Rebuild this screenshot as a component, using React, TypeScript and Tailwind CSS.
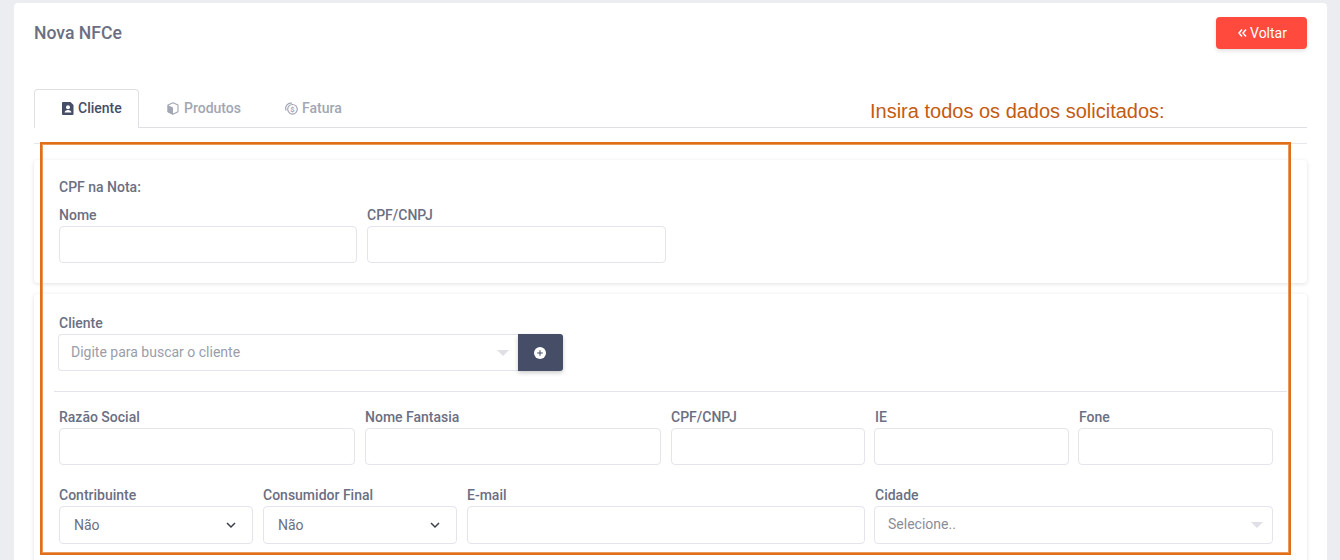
import React from "react";

const labelCls = "block text-[14px] leading-[21px] font-medium text-[#6b6f82]";
const inputCls = "block w-full h-[37px] rounded-[4px] border border-[#e4e5ec] bg-white";

function Field({ label, className, labelClass = "" }: { label: string; className: string; labelClass?: string }) {
  return (
    <div className={className}>
      <label className={`${labelCls} ${labelClass}`}>{label}</label>
      <input className={inputCls} />
    </div>
  );
}

function Chevron() {
  return (
    <svg width="12" height="12" viewBox="0 0 12 12" fill="none" stroke="#3b3f4a" strokeWidth="1.5" className="absolute right-[15px] top-[12px]">
      <path d="M2 4l4 4 4-4" />
    </svg>
  );
}

function NativeSelect({ label, className }: { label: string; className: string }) {
  return (
    <div className={className}>
      <label className={labelCls}>{label}</label>
      <div className="relative h-[38px] rounded-[4px] border border-[#e4e5ec] bg-white pl-[14px] text-[14px] leading-[36px] text-[#6b6f82]">
        Não
        <Chevron />
      </div>
    </div>
  );
}

function Caret() {
  return <div className="h-0 w-0 border-x-[6px] border-t-[6px] border-x-transparent border-t-[#dfe0e6]" />;
}

function FileUserIcon() {
  return (
    <svg width="12" height="13" viewBox="0 0 12 13">
      <path fill="#464d66" d="M1 0h7.5L11.5 3v9a1 1 0 0 1-1 1H1a1 1 0 0 1-1-1V1a1 1 0 0 1 1-1z" />
      <circle cx="6" cy="5.2" r="2" fill="#fff" />
      <path fill="#fff" d="M2.6 10.6c0-1.7 1.4-2.6 3.4-2.6s3.4.9 3.4 2.6z" />
    </svg>
  );
}

function CubeIcon() {
  return (
    <svg width="12" height="13" viewBox="0 0 12 13">
      <path d="M6 .8l5 2.3v6.6l-5 2.6-5-2.6V3.1z" fill="#fff" stroke="#a3a6b3" strokeWidth="1.1" strokeLinejoin="round" />
      <path d="M.6 3L6 5.5v7.2L.6 9.9z" fill="#a3a6b3" />
    </svg>
  );
}

function CoinIcon() {
  return (
    <svg width="13" height="13" viewBox="0 0 13 13" fill="none" stroke="#a3a6b3" strokeWidth="1.2">
      <circle cx="7.5" cy="7.3" r="4.8" />
      <path d="M1.2 8.5A5.2 5.2 0 0 1 7 1.2" />
      <text x="7.5" y="10" textAnchor="middle" fontSize="7.5" fontWeight="700" fill="#a3a6b3" stroke="none" fontFamily="Roboto, sans-serif">$</text>
    </svg>
  );
}

export default function App() {
  return (
    <div className="relative h-[560px] w-[1340px] overflow-hidden bg-[#ecedf0] pt-[3px] pl-[14px] font-['Roboto',sans-serif]">
      <div className="h-[600px] w-[1313px] rounded-[4px] bg-white px-[20px] pt-[14px]">
        {/* header */}
        <div className="flex h-[32px] items-start justify-between">
          <h1 className="mt-[4px] text-[17.6px] leading-[24px] font-medium text-[#6b6f82]">Nova NFCe</h1>
          <button className="flex h-[32px] w-[91px] items-center justify-center gap-[3px] rounded-[4px] bg-[#ff4a3d] pl-[2px] text-[14px] font-normal text-white shadow-[0_2px_4px_rgba(0,0,0,0.12)]">
            <svg width="9" height="8" viewBox="0 0 9 8" fill="none" stroke="#fff" strokeWidth="1.5">
              <path d="M4 .5L1 4l3 3.5M8 .5L5 4l3 3.5" />
            </svg>
            Voltar
          </button>
        </div>

        {/* tabs */}
        <div className="mt-[40px] flex h-[39px] border-b border-[#dfe0e6]">
          <div className="flex h-[39px] w-[105px] items-center gap-[4px] rounded-t-[4px] border border-b-0 border-[#dfe0e6] bg-white pl-[27px] pb-[1px] text-[14px] font-medium text-[#464d66]">
            <FileUserIcon />
            Cliente
          </div>
          <div className="flex h-[38px] w-[118px] items-center gap-[5px] pl-[28px] text-[14px] font-medium text-[#a3a6b3]">
            <CubeIcon />
            Produtos
          </div>
          <div className="flex h-[38px] w-[113px] items-center gap-[4px] pl-[28px] text-[14px] font-medium text-[#a3a6b3]">
            <CoinIcon />
            Fatura
          </div>
        </div>

        {/* tab content divider */}
        <div className="mt-[15px] h-px bg-[#e6e7eb]" />

        {/* first section */}
        <section className="mt-[16px] h-[123px] rounded-[4px] bg-white pl-[20px] pt-[17px] shadow-[0_1px_4px_rgba(0,0,0,0.12)]">
          <p className="pl-[5px] text-[14px] leading-[21px] font-medium text-[#6b6f82]">CPF na Nota:</p>
          <div className="mt-[7px] flex">
            <Field label="Nome" className="w-[308px] px-[5px]" />
            <Field label="CPF/CNPJ" className="w-[309px] px-[5px]" />
          </div>
        </section>

        {/* second section */}
        <section className="mt-[11px] h-[320px] rounded-[4px] bg-white pl-[20px] pr-[20px] pt-[19px] shadow-[0_1px_4px_rgba(0,0,0,0.12)]">
          <div className="pl-[4px]">
            <label className={`${labelCls} ml-[1px]`}>Cliente</label>
            <div className="flex w-[505px]">
              <div className="flex h-[37px] w-[460px] items-center justify-between rounded-l-[4px] border border-r-0 border-[#e4e5ec] pl-[12px] pr-[9px] text-[14px] text-[#9a9da9]">
                Digite para buscar o cliente
                <Caret />
              </div>
              <button className="flex h-[37px] w-[45px] items-center justify-center rounded-r-[3px] bg-[#464d66] shadow-[0_2px_4px_rgba(0,0,0,0.2)]">
                <svg width="12" height="12" viewBox="0 0 12 12" className="-ml-[1px]">
                  <circle cx="6" cy="6" r="6" fill="#fff" />
                  <path d="M6 3.2v5.6M3.2 6h5.6" stroke="#464d66" strokeWidth="1" />
                </svg>
              </button>
            </div>
          </div>

          <hr className="mt-[20px] border-t border-[#e4e5ec]" />

          <div className="mt-[15px] flex w-[1224px]">
            <Field label="Razão Social" className="w-[306px] px-[5px]" />
            <Field label="Nome Fantasia" className="w-[306px] px-[5px]" />
            <Field label="CPF/CNPJ" className="w-[204px] px-[5px]" />
            <Field label="IE" className="w-[204px] pl-[4px] pr-[5px]" labelClass="ml-[1px]" />
            <Field label="Fone" className="w-[204px] pl-[4px] pr-[5px]" labelClass="ml-[1px]" />
          </div>

          <div className="mt-[20px] flex w-[1224px]">
            <NativeSelect label="Contribuinte" className="w-[204px] px-[5px]" />
            <NativeSelect label="Consumidor Final" className="w-[204px] px-[5px]" />
            <div className="w-[408px] px-[5px]">
              <label className={labelCls}>E-mail</label>
              <input className="block h-[38px] w-full rounded-[4px] border border-[#e4e5ec] bg-white" />
            </div>
            <div className="w-[408px] pl-[4px] pr-[5px]">
              <label className={`${labelCls} ml-[1px]`}>Cidade</label>
              <div className="flex h-[38px] items-center justify-between rounded-[4px] border border-[#e4e5ec] bg-white pl-[13px] pr-[9px] text-[14px] text-[#8a8d99]">
                <span className="-mt-[1px]">Selecione..</span>
                <Caret />
              </div>
            </div>
          </div>
        </section>
      </div>

      {/* annotation overlay */}
      <p className="absolute left-[870px] top-[98px] font-['Liberation_Sans',sans-serif] text-[20px] leading-[26px] text-[#c55a11]">
        Insira todos os dados solicitados:
      </p>
      <div className="absolute left-[40px] top-[142px] h-[413px] w-[1251px] border-2 border-[#df6f1b] shadow-[inset_0_0_0_1px_#eb9a5c]" />
    </div>
  );
}
